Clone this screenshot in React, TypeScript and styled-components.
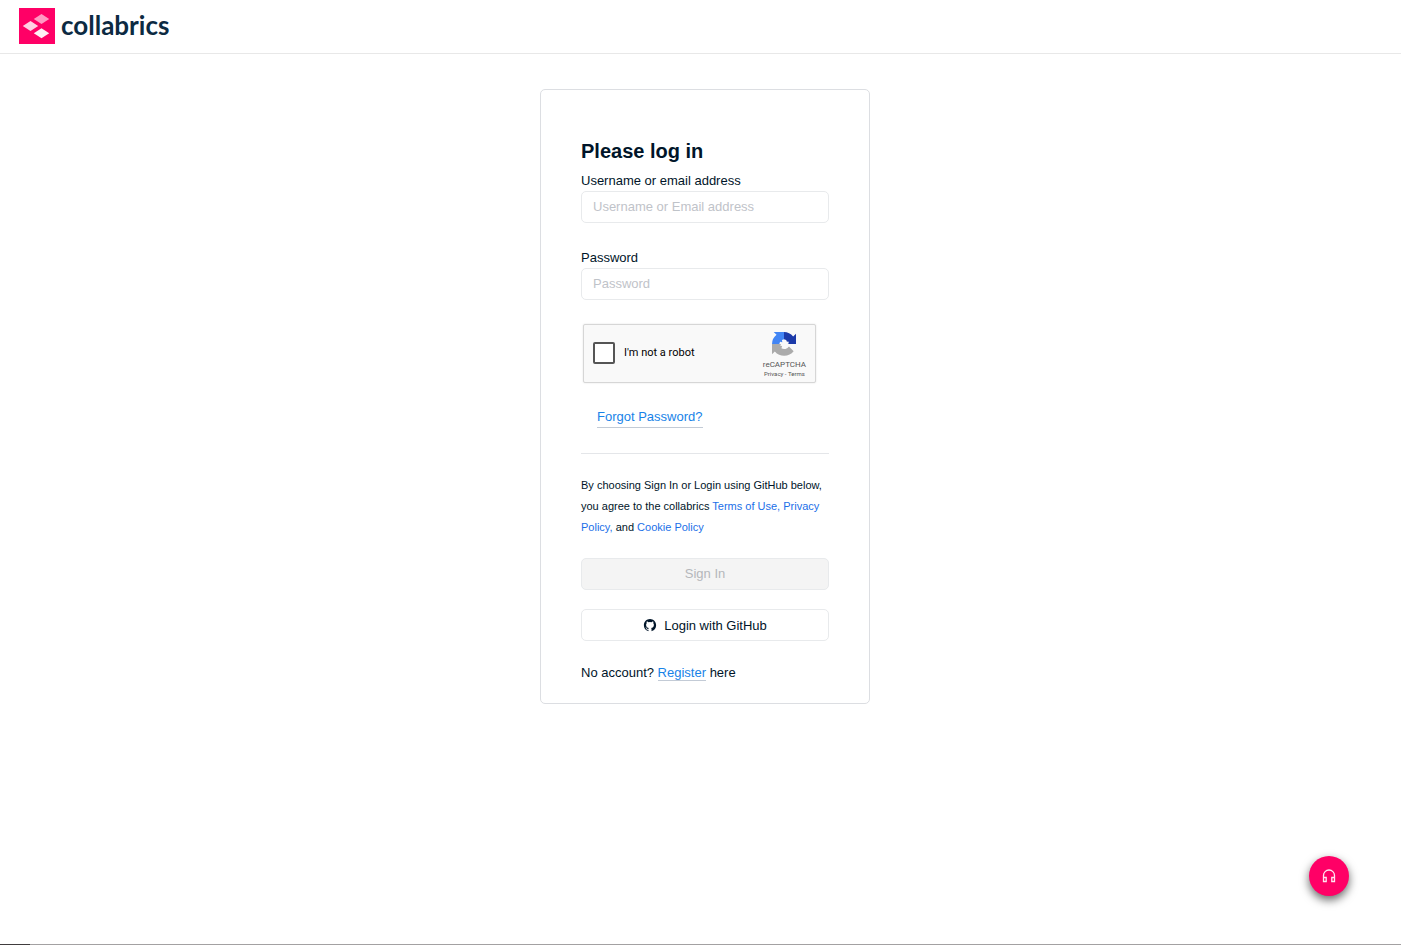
import React from "react";
import styled, { createGlobalStyle } from "styled-components";
import { IoLogoGithub } from "react-icons/io5";

const GlobalStyle = createGlobalStyle`
  *, *::before, *::after { box-sizing: border-box; }
  body {
    margin: 0;
    background: #fff;
    color: #001529;
    font-family: "Liberation Sans", Arial, sans-serif;
    font-size: 13px;
    line-height: 21px;
  }
`;

const Page = styled.div`
  display: flex;
  flex-direction: column;
  min-height: 100vh;
`;

const Header = styled.header`
  display: flex;
  align-items: center;
  padding: 8px 19px 9px;
  border-bottom: 1px solid #e8e8e8;
`;

const Brand = styled.a`
  display: flex;
  align-items: flex-start;
  gap: 6px;
  color: #0c2a42;
  text-decoration: none;
`;

const BrandMark = styled.svg`
  display: block;
  width: 36px;
  height: 36px;
`;

const BrandName = styled.span`
  font-family: Lato, sans-serif;
  font-size: 26px;
  font-weight: 700;
  line-height: 34px;
`;

const Main = styled.main`
  display: flex;
  flex: 1;
  justify-content: center;
  align-items: flex-start;
  padding: 35px 16px 35px 25px;
`;

const Card = styled.form`
  display: flex;
  flex-direction: column;
  width: 100%;
  max-width: 330px;
  padding: 48px 40px 20px;
  border: 1px solid #dcdee2;
  border-radius: 5px;
`;

const Title = styled.h1`
  margin: 0 0 6px;
  font-size: 20px;
  line-height: 26px;
`;

const Field = styled.div`
  display: flex;
  flex-direction: column;
  margin-bottom: 24px;
`;

const TextInput = styled.input`
  width: 100%;
  height: 32px;
  padding: 0 11px 2px;
  border: 1px solid #e8eaec;
  border-radius: 5px;
  background: #fff;
  color: inherit;
  font: inherit;
  &::placeholder { color: #bfc3c9; opacity: 1; }
`;

const Captcha = styled.div`
  display: flex;
  align-items: center;
  justify-content: space-between;
  width: 233px;
  height: 59px;
  margin: 0 2px 23px;
  padding: 0 9px 2px;
  border: 1px solid #d6d6d6;
  border-radius: 2px;
  background: #f9f9f9;
  box-shadow: 0 0 2px rgba(0, 0, 0, 0.12);
`;

const CaptchaLabel = styled.label`
  display: flex;
  align-items: center;
  gap: 9px;
  color: #000;
  font-family: Roboto, sans-serif;
  font-size: 11px;
`;

const CaptchaBox = styled.input`
  appearance: none;
  width: 22px;
  height: 22px;
  margin: 0;
  border: 2px solid #555;
  border-radius: 2px;
  background: #fff;
`;

const CaptchaBrand = styled.div`
  display: flex;
  flex-direction: column;
  align-items: center;
  padding-top: 4px;
  color: #555;
  font-family: Roboto, sans-serif;
  font-size: 8px;
  line-height: 11px;
  svg { display: block; width: 24px; height: 24px; margin-bottom: 3px; }
`;

const CaptchaLinks = styled.small`
  font-size: 6px;
  line-height: 8px;
  a { color: inherit; text-decoration: none; }
`;

const UnderlinedLink = styled.a`
  border-bottom: 1px solid #c3cbd6;
  color: #1883e8;
  text-decoration: none;
`;

const ForgotLink = styled(UnderlinedLink)`
  align-self: flex-start;
  margin-left: 16px;
`;

const Divider = styled.hr`
  width: 100%;
  margin: 25px 0 21px;
  border: 0;
  border-top: 1px solid #e4e6e9;
`;

const Terms = styled.p`
  margin: 0 0 20px;
  font-size: 11px;
  a { color: #1b6fe8; text-decoration: none; }
`;

const Button = styled.button`
  display: flex;
  align-items: center;
  justify-content: center;
  gap: 7px;
  height: 32px;
  margin-bottom: 19px;
  border: 1px solid #e8eaec;
  border-radius: 5px;
  background: #fff;
  color: inherit;
  font: inherit;
  cursor: pointer;
  &:disabled { padding-bottom: 3px; background: #f4f4f4; color: #b4b7bb; cursor: not-allowed; }
`;

const Register = styled.p`
  margin: 2px 0 0;
`;

const SupportButton = styled.button`
  position: fixed;
  right: 52px;
  bottom: 49px;
  display: grid;
  place-items: center;
  width: 40px;
  height: 40px;
  padding: 0;
  border: 0;
  border-radius: 50%;
  background: #ff0066;
  color: #ffe5f0;
  box-shadow: 0 4px 10px rgba(0, 0, 0, 0.6);
`;

const BottomRule = styled.footer`
  height: 1px;
  background: linear-gradient(to right, #403c3e 30px, #a3a1a2 30px);
`;

const CaptchaIcon = () => (
  <svg viewBox="0 0 64 64" aria-hidden="true">
    <path fill="#1c3aa9" d="M64 32V4.500l-7.600 7.600A31.900 31.900 0 0 0 31.800 0v19.500l6 1.500 2 5 4-1 1 5-3 2Z" />
    <path fill="#4285f4" d="M32 0H4.500l7.600 7.600A31.900 31.900 0 0 0 0 32h19.500l2-6 6 1-1-6 5.500-1.500Z" />
    <path fill="#ababab" d="M0 32v27.500l7.600-7.600A31.900 31.900 0 0 0 57.700 51L45.200 38.500A15 15 0 0 1 25 43.500l2-6-5-1 2-4.500Z" />
  </svg>
);

const HeadphonesIcon = () => (
  <svg width="14" height="14" viewBox="0 0 14 14" fill="none" stroke="currentColor" strokeWidth="1.3" aria-hidden="true">
    <path d="M1.500 8.500V6.500a5.500 5.500 0 0 1 11 0v2M1.500 8.500h2.700v4H1.500ZM12.500 8.500H9.800v4h2.700Z" />
  </svg>
);

export default function App() {
  return (
    <>
      <GlobalStyle />
      <Page>
        <Header>
          <Brand href="#">
            <BrandMark viewBox="0 0 36 36" aria-hidden="true">
              <path fill="#ff0066" d="M0 0h36v36H0z" />
              <path fill="#ff99c2" d="m22.500 6 7.700 5-7.700 5-7.700-5Z" />
              <path fill="#ffd0e3" d="m11.500 13 7.700 5-7.700 5-7.700-5Z" />
              <path fill="#fff0f6" d="m22.500 20.200 7.700 5-7.700 5-7.700-5Z" />
            </BrandMark>
            <BrandName>collabrics</BrandName>
          </Brand>
        </Header>
        <Main>
          <Card onSubmit={(event) => event.preventDefault()}>
            <Title>Please log in</Title>
            <Field>
              <label htmlFor="username">Username or email address</label>
              <TextInput id="username" type="text" placeholder="Username or Email address" />
            </Field>
            <Field>
              <label htmlFor="password">Password</label>
              <TextInput id="password" type="password" placeholder="Password" />
            </Field>
            <Captcha>
              <CaptchaLabel>
                <CaptchaBox type="checkbox" />
                I'm not a robot
              </CaptchaLabel>
              <CaptchaBrand>
                <CaptchaIcon />
                reCAPTCHA
                <CaptchaLinks>
                  <a href="#">Privacy</a> - <a href="#">Terms</a>
                </CaptchaLinks>
              </CaptchaBrand>
            </Captcha>
            <ForgotLink href="#">Forgot Password?</ForgotLink>
            <Divider />
            <Terms>
              By choosing Sign In or Login using GitHub below, you agree to the collabrics{" "}
              <a href="#">Terms of Use,</a> <a href="#">Privacy Policy,</a> and{" "}
              <a href="#">Cookie Policy</a>
            </Terms>
            <Button type="submit" disabled>Sign In</Button>
            <Button type="button">
              <IoLogoGithub size={14} aria-hidden="true" />
              Login with GitHub
            </Button>
            <Register>
              No account? <UnderlinedLink href="#">Register</UnderlinedLink> here
            </Register>
          </Card>
        </Main>
        <BottomRule />
      </Page>
      <SupportButton type="button" aria-label="Support">
        <HeadphonesIcon />
      </SupportButton>
    </>
  );
}
